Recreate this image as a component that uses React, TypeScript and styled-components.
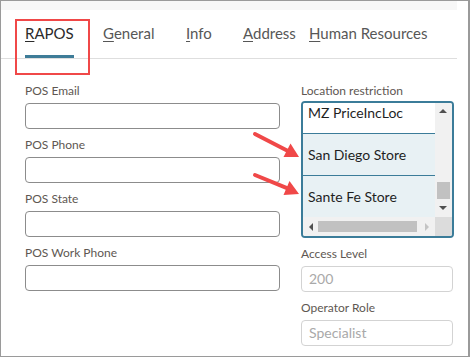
import React from 'react';
import styled, { createGlobalStyle } from 'styled-components';

const GlobalStyle = createGlobalStyle`
  html, body {
    margin: 0;
    padding: 0;
    background: #ffffff;
  }
  body {
    font-family: 'Lato', 'Noto Sans', sans-serif;
  }
`;

const Frame = styled.div`
  position: relative;
  box-sizing: border-box;
  width: 470px;
  height: 357px;
  border: 1px solid #9a9a9a;
  border-right-width: 2px;
  background: #fff;
  overflow: hidden;
`;

const Panel = styled.div`
  width: 456px;
`;

const TopStrip = styled.div`
  height: 9px;
  background: #f7f7f7;
`;

const TabBar = styled.div`
  display: flex;
  height: 48px;
  padding-left: 24px;
  border-bottom: 1px solid #dedede;
`;

const TabItem = styled.div<{ $width?: number }>`
  display: flex;
  flex-direction: column;
  width: ${(p) => (p.$width ? `${p.$width}px` : 'auto')};
  flex-shrink: 0;
`;

const TabText = styled.div<{ $active?: boolean }>`
  align-self: flex-start;
  box-sizing: border-box;
  height: 48px;
  padding-top: 14px;
  font-size: 15px;
  line-height: 18px;
  white-space: nowrap;
  color: ${(p) => (p.$active ? '#2b2b2b' : '#575757')};
  border-bottom: 3px solid ${(p) => (p.$active ? '#3e7c98' : 'transparent')};

  u {
    text-decoration: underline;
    text-decoration-thickness: 1px;
    text-underline-offset: 2px;
  }
`;

const Body = styled.div`
  display: grid;
  grid-template-columns: 255px 153px;
  column-gap: 21px;
  padding: 24px 0 0 24px;
`;

const Column = styled.div`
  display: flex;
  flex-direction: column;
`;

const Field = styled.div`
  display: flex;
  flex-direction: column;
  margin-bottom: 8px;
`;

const Label = styled.div`
  font-size: 12px;
  line-height: 16px;
  color: #5e5752;
  margin-bottom: 4px;
  white-space: nowrap;
`;

const TextInput = styled.div<{ $disabled?: boolean }>`
  box-sizing: border-box;
  height: 26px;
  width: ${(p) => (p.$disabled ? '152px' : '100%')};
  border: 1px solid ${(p) => (p.$disabled ? '#d3d3d3' : '#8c8c8c')};
  border-radius: 4px;
  padding: 0 7px;
  font-size: 14px;
  line-height: 24px;
  color: #a9a9a9;
`;

const ListBox = styled.div`
  box-sizing: border-box;
  width: 153px;
  height: 137px;
  margin-top: -2px;
  border: 2px solid #3b7c99;
  border-radius: 4px;
  display: grid;
  grid-template-columns: 132px 17px;
  grid-template-rows: 114px 19px;
  overflow: hidden;
`;

const Items = styled.div`
  overflow: hidden;
`;

const ItemStack = styled.div`
  margin-top: -11px;
`;

const Item = styled.div<{ $selected?: boolean }>`
  box-sizing: border-box;
  height: 42px;
  padding-left: 5px;
  display: flex;
  align-items: center;
  font-size: 14px;
  color: #1f1f1f;
  white-space: nowrap;
  background: ${(p) => (p.$selected ? '#e8f1f4' : '#ffffff')};
  border-bottom: 1px solid #3b7c99;
`;

const VScroll = styled.div`
  position: relative;
  background: #f1f1f1;
`;

const HScroll = styled.div`
  position: relative;
  background: #f1f1f1;
`;

const Corner = styled.div`
  background: #dcdcdc;
`;

const Thumb = styled.div`
  position: absolute;
  background: #c1c1c1;
`;

const Arrow = styled.div<{ $dir: 'up' | 'down' | 'left' | 'right'; $dim?: boolean }>`
  position: absolute;
  width: 0;
  height: 0;
  ${(p) => {
    const c = p.$dim ? '#c4c4c4' : '#505050';
    switch (p.$dir) {
      case 'up':
        return `border-left: 4px solid transparent; border-right: 4px solid transparent; border-bottom: 4px solid ${c};`;
      case 'down':
        return `border-left: 4px solid transparent; border-right: 4px solid transparent; border-top: 4px solid ${c};`;
      case 'left':
        return `border-top: 4px solid transparent; border-bottom: 4px solid transparent; border-right: 4px solid ${c};`;
      default:
        return `border-top: 4px solid transparent; border-bottom: 4px solid transparent; border-left: 4px solid ${c};`;
    }
  }}
`;

const Callout = styled.div`
  position: absolute;
  left: 14px;
  top: 18px;
  width: 75px;
  height: 56px;
  box-sizing: border-box;
  border: 2px solid #f04848;
  pointer-events: none;
`;

const Pointers = styled.svg`
  position: absolute;
  left: -1px;
  top: -1px;
  pointer-events: none;
`;

const tabs = [
  { key: 'R', rest: 'APOS', width: 78, active: true },
  { key: 'G', rest: 'eneral', width: 83 },
  { key: 'I', rest: 'nfo', width: 57 },
  { key: 'A', rest: 'ddress', width: 66 },
  { key: 'H', rest: 'uman Resources' },
];

const leftFields = ['POS Email', 'POS Phone', 'POS State', 'POS Work Phone'];

export default function App() {
  return (
    <>
      <GlobalStyle />
      <Frame>
        <Panel>
          <TopStrip />
          <TabBar>
            {tabs.map((t) => (
              <TabItem key={t.key + t.rest} $width={t.width}>
                <TabText $active={t.active}>
                  <u>{t.key}</u>
                  {t.rest}
                </TabText>
              </TabItem>
            ))}
          </TabBar>
          <Body>
            <Column>
              {leftFields.map((f) => (
                <Field key={f}>
                  <Label>{f}</Label>
                  <TextInput />
                </Field>
              ))}
            </Column>
            <Column>
              <Field>
                <Label>Location restriction</Label>
                <ListBox>
                  <Items>
                    <ItemStack>
                      <Item>MZ PriceIncLoc</Item>
                      <Item $selected>San Diego Store</Item>
                      <Item $selected>Sante Fe Store</Item>
                    </ItemStack>
                  </Items>
                  <VScroll>
                    <Arrow $dir="up" style={{ left: 4, top: 6 }} />
                    <Thumb style={{ left: 2, top: 79, width: 13, height: 17 }} />
                    <Arrow $dir="down" style={{ left: 4, top: 103 }} />
                  </VScroll>
                  <HScroll>
                    <Arrow $dir="left" style={{ left: 6, top: 6 }} />
                    <Thumb style={{ left: 15, top: 4, width: 99, height: 11 }} />
                    <Arrow $dir="right" $dim style={{ left: 122, top: 6 }} />
                  </HScroll>
                  <Corner />
                </ListBox>
              </Field>
              <Field>
                <Label>Access Level</Label>
                <TextInput $disabled>200</TextInput>
              </Field>
              <Field>
                <Label>Operator Role</Label>
                <TextInput $disabled>Specialist</TextInput>
              </Field>
            </Column>
          </Body>
        </Panel>
        <Callout />
        <Pointers width="470" height="357" viewBox="0 0 470 357">
          <g fill="#f04848" stroke="#f04848">
            <line x1="255" y1="134" x2="287" y2="150.5" strokeWidth="4" strokeLinecap="round" />
            <polygon points="299,157 283.5,157 290.5,143.5" stroke="none" />
            <line x1="255" y1="175" x2="287" y2="188.2" strokeWidth="4" strokeLinecap="round" />
            <polygon points="299,194 283.5,195 289.5,181" stroke="none" />
          </g>
        </Pointers>
      </Frame>
    </>
  );
}
